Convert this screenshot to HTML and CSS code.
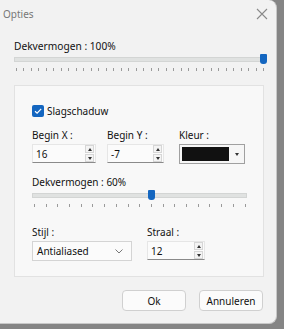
FILE: index.html
```html
<!DOCTYPE html>
<html lang="nl">
<head>
  <meta charset="UTF-8">
  <title>Opties</title>
  <link rel="stylesheet" href="styles.css">
</head>
<body>
  <div class="dialog">
    <div class="titlebar">
      <span class="title">Opties</span>
      <svg class="close" width="12" height="12" viewBox="0 0 12 12"><path d="M1 1 L11 11 M11 1 L1 11" stroke="#8a8a8a" stroke-width="1.1" fill="none"/></svg>
    </div>

    <div class="content">
      <div class="label top-label">Dekvermogen : 100%</div>
      <div class="slider wide">
        <div class="track"><span class="thumb" style="left: 245px"></span></div>
        <div class="ticks"></div>
      </div>

      <div class="group">
        <div class="check-row">
          <span class="checkbox">
            <svg width="12" height="12" viewBox="0 0 12 12"><path d="M3 6.2 L5.1 8.2 L9.2 3.8" stroke="#fff" stroke-width="1.2" fill="none"/></svg>
          </span>
          <span class="label">Slagschaduw</span>
        </div>

        <div class="fields">
          <div class="field fx">
            <div class="label">Begin X :</div>
            <div class="spin"><span>16</span><div class="spin-btns"><i class="up"></i><i class="down"></i></div></div>
          </div>
          <div class="field fy">
            <div class="label">Begin Y :</div>
            <div class="spin"><span>-7</span><div class="spin-btns"><i class="up"></i><i class="down"></i></div></div>
          </div>
          <div class="field fc">
            <div class="label">Kleur :</div>
            <div class="color"><span class="swatch"></span><i class="down"></i></div>
          </div>
        </div>

        <div class="label mid-label">Dekvermogen : 60%</div>
        <div class="slider narrow">
          <div class="track"><span class="thumb" style="left: 115px"></span></div>
          <div class="ticks"></div>
        </div>

        <div class="fields bottom-fields">
          <div class="field fs">
            <div class="label">Stijl :</div>
            <div class="select"><span>Antialiased</span>
              <svg width="8" height="5" viewBox="0 0 8 5"><path d="M0.5 0.5 L4 4 L7.5 0.5" stroke="#777" fill="none"/></svg>
            </div>
          </div>
          <div class="field fr">
            <div class="label">Straal :</div>
            <div class="spin"><span>12</span><div class="spin-btns"><i class="up"></i><i class="down"></i></div></div>
          </div>
        </div>
      </div>
    </div>

    <div class="actions">
      <button>Ok</button>
      <button>Annuleren</button>
    </div>
  </div>
</body>
</html>
```

FILE: styles.css
```css
* {
  box-sizing: border-box;
  margin: 0;
  padding: 0;
}

body {
  background-color: #858585;
  font-family: "Noto Sans", "Open Sans", sans-serif;
  font-size: 10px;
  color: #111;
  width: 284px;
  height: 329px;
  overflow: hidden;
}

.dialog {
  width: 277px;
  height: 324px;
  background-color: #f2f2f2;
  border-right: 1px solid #c8c8c8;
  border-bottom: 1px solid #c8c8c8;
  border-radius: 0 8px 8px 0;
  display: flex;
  flex-direction: column;
}

.titlebar {
  height: 30px;
  display: flex;
  align-items: center;
  justify-content: space-between;
  padding: 0 8px 2px 3px;
}

.title {
  color: #777;
  font-size: 10px;
}

.content {
  padding: 9px 14px 0 14px;
}

.label {
  line-height: 14px;
  white-space: nowrap;
}

.top-label {
  font-size: 10.2px;
}

/* sliders */
.slider {
  margin-top: 4px;
}

.track {
  position: relative;
  height: 5px;
  background-color: #e0e2e1;
  border: 1px solid #d3d5d4;
}

.thumb {
  position: absolute;
  top: -4px;
  width: 7px;
  height: 10px;
  background-color: #1466c0;
  border-radius: 1px 1px 3px 3px;
}

.ticks {
  height: 3px;
  margin-top: 6px;
  margin-left: 2px;
  background-image: repeating-linear-gradient(to right, #9a9a9a 0, #9a9a9a 1px, transparent 1px, transparent 7.5px);
}

.wide .track {
  width: 249px;
}

.wide .ticks {
  width: 248px;
}

.narrow .track {
  width: 215px;
}

.narrow .ticks {
  width: 214px;
  background-image: repeating-linear-gradient(to right, #9a9a9a 0, #9a9a9a 1px, transparent 1px, transparent 11.7px);
}

/* group box */
.group {
  margin-top: 14px;
  width: 250px;
  height: 192px;
  background-color: #f8f8f8;
  border: 1px solid #e2e2e2;
  padding: 18px 0 0 17px;
}

.check-row {
  display: flex;
  align-items: center;
  gap: 3px;
}

.checkbox {
  width: 12px;
  height: 12px;
  background-color: #1466c0;
  border-radius: 2px;
  display: flex;
}

.fields {
  display: flex;
  margin-top: 10px;
}

.field .label {
  margin-bottom: 2px;
}

.fx { width: 75px; }
.fy { width: 72px; }
.fs { width: 115px; }

.spin {
  height: 19px;
  width: 64px;
  background-color: #fbfbfb;
  border: 1px solid #e6e6e6;
  border-bottom: 1px solid #8a8a8a;
  display: flex;
  align-items: center;
  justify-content: space-between;
  padding: 0 1px 0 3px;
}

.fy .spin { width: 57px; }
.fr .spin { width: 58px; }

.spin-btns {
  display: flex;
  flex-direction: column;
  gap: 1px;
}

.spin-btns i {
  width: 9px;
  height: 8px;
  border: 1px solid #d6d6d6;
  background-color: #f4f4f4;
  display: flex;
  align-items: center;
  justify-content: center;
}

.up::after,
.down::after {
  content: "";
  border-left: 2.5px solid transparent;
  border-right: 2.5px solid transparent;
}

.up::after {
  border-bottom: 3px solid #333;
}

.down::after {
  border-top: 3px solid #333;
}

.color {
  width: 66px;
  height: 20px;
  border: 1px solid #a0a0a0;
  background-color: #f6f6f6;
  display: flex;
  align-items: center;
  padding: 0 0 0 2px;
}

.swatch {
  width: 47px;
  height: 14px;
  background-color: #111;
}

.color .down {
  flex: 1;
  display: flex;
  justify-content: center;
}

.mid-label {
  margin-top: 11px;
}

.narrow {
  margin-top: 4px;
}

.bottom-fields {
  margin-top: 18px;
}

.select {
  width: 100px;
  height: 20px;
  background-color: #fbfbfb;
  border: 1px solid #d4d4d4;
  display: flex;
  align-items: center;
  justify-content: space-between;
  padding: 0 8px 0 4px;
}

/* buttons */
.actions {
  display: flex;
  justify-content: flex-end;
  gap: 13px;
  padding: 13px 13px 0 0;
}

.actions button {
  width: 64px;
  height: 21px;
  background-color: #fbfbfb;
  border: 1px solid #d0d0d0;
  border-radius: 4px;
  font-family: inherit;
  font-size: 10px;
  color: #111;
}
```
